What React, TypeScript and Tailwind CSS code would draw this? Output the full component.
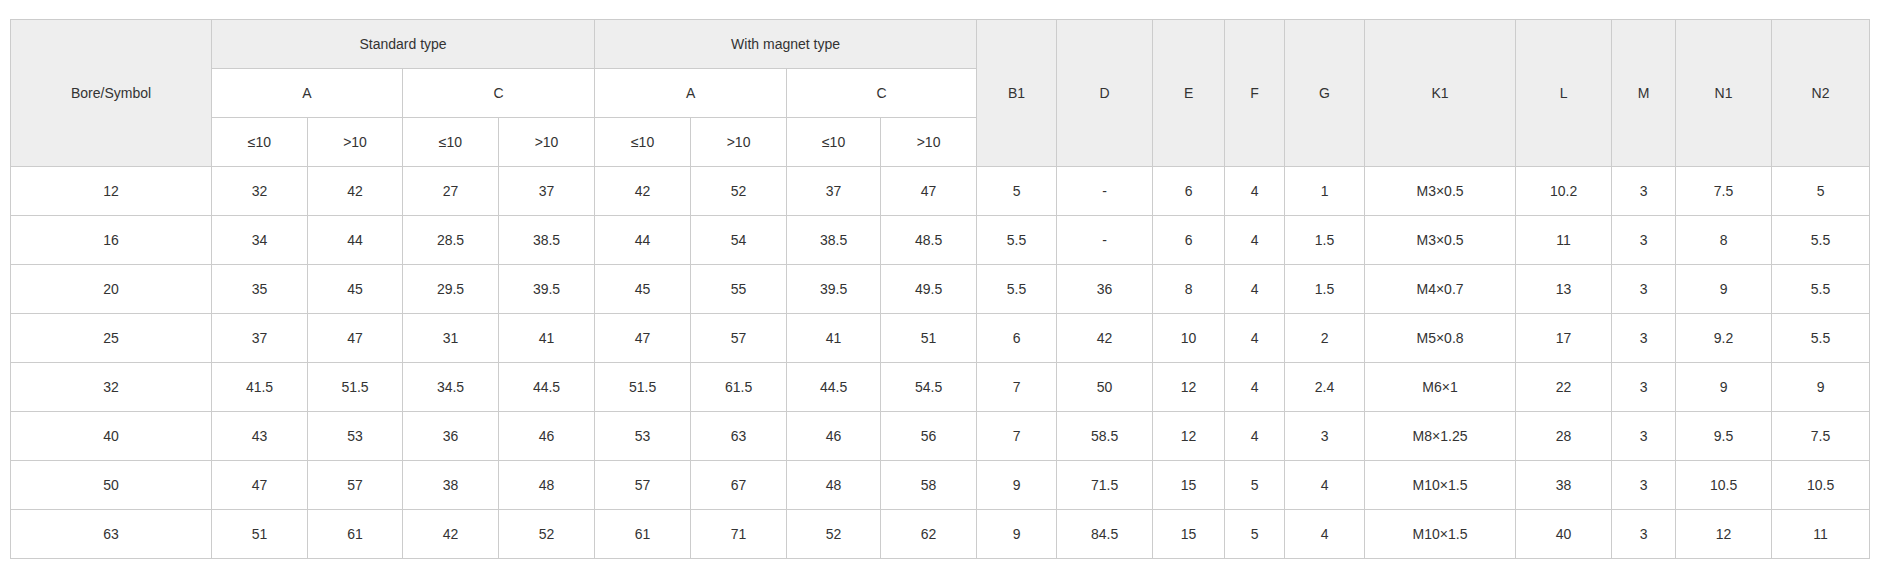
import { Fragment } from 'react'

const colWidths = [201, 96, 95, 96, 96, 96, 96, 94, 96, 80, 96, 72, 60, 80, 151, 96, 64, 96, 98]

const singleCols = ['B1', 'D', 'E', 'F', 'G', 'K1', 'L', 'M', 'N1', 'N2']

const rows: string[][] = [
  ['12', '32', '42', '27', '37', '42', '52', '37', '47', '5', '-', '6', '4', '1', 'M3×0.5', '10.2', '3', '7.5', '5'],
  ['16', '34', '44', '28.5', '38.5', '44', '54', '38.5', '48.5', '5.5', '-', '6', '4', '1.5', 'M3×0.5', '11', '3', '8', '5.5'],
  ['20', '35', '45', '29.5', '39.5', '45', '55', '39.5', '49.5', '5.5', '36', '8', '4', '1.5', 'M4×0.7', '13', '3', '9', '5.5'],
  ['25', '37', '47', '31', '41', '47', '57', '41', '51', '6', '42', '10', '4', '2', 'M5×0.8', '17', '3', '9.2', '5.5'],
  ['32', '41.5', '51.5', '34.5', '44.5', '51.5', '61.5', '44.5', '54.5', '7', '50', '12', '4', '2.4', 'M6×1', '22', '3', '9', '9'],
  ['40', '43', '53', '36', '46', '53', '63', '46', '56', '7', '58.5', '12', '4', '3', 'M8×1.25', '28', '3', '9.5', '7.5'],
  ['50', '47', '57', '38', '48', '57', '67', '48', '58', '9', '71.5', '15', '5', '4', 'M10×1.5', '38', '3', '10.5', '10.5'],
  ['63', '51', '61', '42', '52', '61', '71', '52', '62', '9', '84.5', '15', '5', '4', 'M10×1.5', '40', '3', '12', '11'],
]

const cell = 'border border-[#cccccc] h-[49px] p-0 text-center align-middle font-normal'
const head = `${cell} bg-[#eeeeee]`

export default function App() {
  return (
    <div className="min-h-[570px] bg-white px-[10px] pt-[19px] font-['Liberation_Sans',Arial,sans-serif] text-[14px] text-[#333333]">
      <table className="w-[1859px] table-fixed border-collapse">
        <colgroup>
          {colWidths.map((w, i) => (
            <col key={i} style={{ width: w }} />
          ))}
        </colgroup>
        <thead>
          <tr>
            <th rowSpan={3} className={head}>Bore/Symbol</th>
            <th colSpan={4} className={head}>Standard type</th>
            <th colSpan={4} className={head}>With magnet type</th>
            {singleCols.map((c) => (
              <th key={c} rowSpan={3} className={head}>{c}</th>
            ))}
          </tr>
          <tr>
            <th colSpan={2} className={cell}>A</th>
            <th colSpan={2} className={cell}>C</th>
            <th colSpan={2} className={cell}>A</th>
            <th colSpan={2} className={cell}>C</th>
          </tr>
          <tr>
            {[0, 1, 2, 3].map((i) => (
              <Fragment key={i}>
                <th className={cell}>≤10</th>
                <th className={cell}>&gt;10</th>
              </Fragment>
            ))}
          </tr>
        </thead>
        <tbody>
          {rows.map((r) => (
            <tr key={r[0]}>
              {r.map((v, i) => (
                <td key={i} className={cell}>{v}</td>
              ))}
            </tr>
          ))}
        </tbody>
      </table>
    </div>
  )
}
